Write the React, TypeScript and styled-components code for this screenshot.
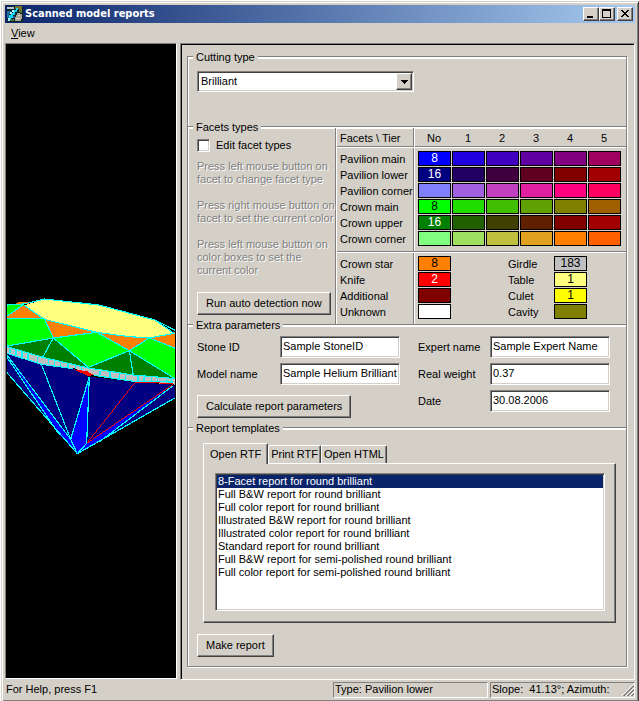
import React, { useState } from "react";
import styled, { createGlobalStyle, css } from "styled-components";

const sans = '"Liberation Sans", Arial, sans-serif';
const titleSans = '"DejaVu Sans Condensed", Tahoma, sans-serif';

const c = {
  face: "#d4d0c8",
  shadow: "#808080",
  dark: "#404040",
  light: "#ffffff",
  select: "#0a246a",
};

const raised = css`
  border: 1px solid;
  border-color: ${c.light} ${c.dark} ${c.dark} ${c.light};
  box-shadow: inset -1px -1px 0 ${c.shadow};
`;

const sunken = css`
  border: 1px solid;
  border-color: ${c.shadow} ${c.light} ${c.light} ${c.shadow};
  box-shadow: inset 1px 1px 0 ${c.dark}, inset -1px -1px 0 ${c.face};
`;

const Global = createGlobalStyle`
  * { box-sizing: border-box; }
  body {
    margin: 0;
    background: #fff;
    color: #000;
    font: 11px/13px ${sans};
  }
  button, input, select { font: inherit; color: inherit; }
`;

const Page = styled.div`
  min-height: 100vh;
  padding: 1px 0 0 1px;
  display: flex;
`;

const Window = styled.main`
  flex: 1;
  min-width: 0;
  display: flex;
  flex-direction: column;
  padding: 3px;
  background: ${c.face};
  border: 1px solid;
  border-color: ${c.face} ${c.dark} ${c.dark} ${c.face};
  box-shadow: inset 1px 1px 0 ${c.light}, inset -1px -1px 0 ${c.shadow};
`;

const TitleBar = styled.header`
  display: flex;
  align-items: center;
  gap: 2px;
  height: 18px;
  padding: 0 2px;
  background: linear-gradient(90deg, #0a246a, #a6caf0);
`;

const Title = styled.h1`
  flex: 1;
  margin: 0;
  color: #fff;
  font: bold 11px/16px ${titleSans};
`;

const Caption = styled.div`
  display: flex;
`;

const CaptionButton = styled.button<{ $apart?: boolean }>`
  ${raised}
  width: 16px;
  height: 14px;
  padding: 0;
  margin-left: ${(p) => (p.$apart ? 2 : 0)}px;
  background: ${c.face};
  display: flex;
  svg {
    width: 14px;
    height: 12px;
  }
`;

const MenuBar = styled.nav`
  height: 20px;
  padding: 4px 3px;
`;

const MenuItem = styled.button`
  display: block;
  padding: 0 3px;
  border: 0;
  background: none;
`;

const Body = styled.div`
  flex: 1;
  display: flex;
  gap: 3px;
`;

const ModelView = styled.section`
  flex: 0 0 172px;
  display: flex;
  margin-bottom: 1px;
  background: #000;
  border: 1px solid;
  border-color: ${c.shadow} ${c.light} ${c.light} ${c.shadow};
  padding: 1px;
  svg {
    flex: 1;
    min-width: 0;
  }
`;

const Panel = styled.section`
  flex: 1;
  min-width: 0;
  padding: 12px 7px 10px 6px;
  border: 1px solid;
  border-color: ${c.shadow} ${c.light} ${c.light} ${c.shadow};
  box-shadow: inset 1px 1px 0 #000;
`;

const Groups = styled.div`
  display: flex;
  flex-direction: column;
  border: solid ${c.shadow};
  border-width: 0 1px 1px 1px;
  box-shadow: 1px 1px 0 ${c.light}, inset 1px 0 0 ${c.light};
`;

const Group = styled.fieldset`
  min-width: 0;
  margin: 0;
  border: 0;
  padding: 0;
  &:first-child {
    margin-top: -6px;
  }
`;

const Legend = styled.legend`
  display: flex;
  align-items: center;
  gap: 3px;
  width: 100%;
  height: 14px;
  padding: 0;
  &::before,
  &::after {
    content: "";
    width: 5px;
    height: 2px;
    background: ${c.light};
    border-top: 1px solid ${c.shadow};
  }
  &::after {
    flex: 1;
  }
`;

const GroupBody = styled.div<{ $pad: string }>`
  padding: ${(p) => p.$pad};
`;

const Combo = styled.div`
  ${sunken}
  position: relative;
  width: 217px;
  height: 21px;
  padding: 1px;
  background: #fff;
`;

const ComboSelect = styled.select`
  appearance: none;
  display: block;
  width: 100%;
  height: 17px;
  padding: 0 18px 0 2px;
  border: 0;
  background: #fff;
`;

const ComboArrow = styled.span`
  ${raised}
  position: absolute;
  top: 1px;
  right: 1px;
  width: 16px;
  height: 17px;
  background: ${c.face};
  pointer-events: none;
  display: flex;
  align-items: center;
  justify-content: center;
`;

const PushButton = styled.button`
  ${raised}
  height: 23px;
  padding: 0 8px;
  background: ${c.face};
  white-space: nowrap;
`;

const FacetLayout = styled.div`
  display: flex;
  margin: -6px 0;
`;

const FacetSide = styled.div`
  flex: 0 0 149px;
  padding: 11px 0 0 9px;
  border-right: 1px solid ${c.light};
  box-shadow: inset -1px 0 0 ${c.shadow};
`;

const CheckLabel = styled.label`
  display: flex;
  align-items: center;
  gap: 6px;
  height: 13px;
`;

const CheckBox = styled.input`
  ${sunken}
  appearance: none;
  width: 13px;
  height: 13px;
  margin: 0;
  background: #fff;
  &:checked {
    background: radial-gradient(#000 3px, #fff 3px);
  }
`;

const Hints = styled.div`
  padding: 8px 0 15px;
  color: ${c.shadow};
  text-shadow: 1px 1px 0 ${c.light};
  white-space: pre;
  p {
    margin: 0 0 13px;
  }
  p:last-child {
    margin: 0;
  }
`;

const FacetTable = styled.table`
  flex: 1;
  border-spacing: 0;
  table-layout: fixed;
  width: 100%;
  min-width: 0;
`;

const LabelCell = styled.th`
  width: 78px;
  height: 16px;
  padding: 0 0 0 3px;
  font-weight: normal;
  text-align: left;
  white-space: nowrap;
  border-right: 1px solid ${c.light};
  box-shadow: inset -1px 0 0 ${c.shadow};
`;

const HeadRow = styled.tr`
  th {
    height: 20px;
    padding-top: 1px;
    border-bottom: 1px solid ${c.light};
    background: linear-gradient(${c.shadow}, ${c.shadow}) bottom / 100% 1px no-repeat padding-box;
  }
`;

const TierCell = styled.th<{ $first?: boolean }>`
  width: ${(p) => (p.$first ? 37 : 34)}px;
  padding: 0 2px 0 ${(p) => (p.$first ? 3 : 0)}px;
  font-weight: normal;
  text-align: center;
`;

const RestCell = styled.th`
  padding: 0;
`;

const Gap = styled.tr<{ $size: number }>`
  th,
  td {
    height: ${(p) => p.$size}px;
    line-height: 0;
    padding: 0;
  }
`;

const LineRow = styled.tr`
  td {
    height: 2px;
    padding: 0;
    border-top: 1px solid ${c.shadow};
    background: ${c.light};
  }
`;

const SwatchCell = styled.td<{ $first?: boolean }>`
  height: 16px;
  padding: 0 0 1px ${(p) => (p.$first ? 3 : 0)}px;
`;

const NameCell = styled.td`
  padding: 0 0 0 56px;
`;

const Swatch = styled.button<{ $bg: string; $fg?: string }>`
  display: block;
  width: 33px;
  height: 15px;
  padding: 0;
  border: 1px solid #000;
  background: ${(p) => p.$bg};
  color: ${(p) => p.$fg || "#000"};
  font-size: 12px;
  line-height: 13px;
  text-align: center;
`;

const ExtraLayout = styled.div`
  display: grid;
  grid-template-columns: 203px 192px;
  column-gap: 18px;
`;

const FieldColumn = styled.div`
  display: flex;
  flex-direction: column;
  align-items: flex-start;
  gap: 5px;
  > button {
    margin-top: 5px;
  }
`;

const Field = styled.label<{ $label: number }>`
  display: grid;
  grid-template-columns: ${(p) => p.$label}px 120px;
  align-items: center;
  height: 22px;
`;

const FieldText = styled.span`
  white-space: nowrap;
`;

const TextBox = styled.input`
  ${sunken}
  width: 120px;
  height: 22px;
  padding: 0 1px 2px 2px;
  background: #fff;
`;

const TabArea = styled.div`
  margin: 0 1px 11px 6px;
`;

const TabList = styled.div`
  display: flex;
  align-items: flex-end;
  height: 21px;
  margin-bottom: -1px;
`;

const Tab = styled.button<{ $active: boolean }>`
  position: relative;
  height: ${(p) => (p.$active ? 21 : 18)}px;
  margin-bottom: ${(p) => (p.$active ? 0 : 1)}px;
  padding: 0 ${(p) => (p.$active ? 6 : 2)}px;
  border: solid;
  border-width: 1px 1px 0 1px;
  border-color: ${c.light} ${c.dark} ${c.light} ${c.light};
  border-radius: 2px 2px 0 0;
  box-shadow: inset -1px 0 0 ${c.shadow};
  background: ${c.face};
  white-space: nowrap;
`;

const TabPanel = styled.div`
  ${raised}
  padding: 9px 10px 11px 11px;
`;

const ReportList = styled.ul`
  ${sunken}
  height: 138px;
  margin: 0;
  padding: 1px;
  background: #fff;
  list-style: none;
`;

const ReportItem = styled.li<{ $selected: boolean }>`
  height: 13px;
  padding: 0 1px;
  white-space: nowrap;
  background: ${(p) => (p.$selected ? c.select : "transparent")};
  color: ${(p) => (p.$selected ? "#fff" : "#000")};
`;

const StatusBar = styled.footer`
  display: flex;
  gap: 2px;
  height: 18px;
  padding-top: 2px;
`;

const StatusText = styled.span`
  flex: 1;
  padding: 1px;
`;

const StatusPane = styled.span<{ $width: number }>`
  flex: 0 0 ${(p) => p.$width}px;
  display: flex;
  justify-content: space-between;
  height: 16px;
  padding-left: 1px;
  border: 1px solid;
  border-color: ${c.shadow} ${c.light} ${c.light} ${c.shadow};
  white-space: pre;
`;

const tiers: { name: string; count?: string; fg?: string; colors: string[] }[] = [
  { name: "Pavilion main", count: "8", fg: "#fff", colors: ["#0000ff", "#2000df", "#4000bf", "#6000a0", "#800080", "#a00060"] },
  { name: "Pavilion lower", count: "16", fg: "#fff", colors: ["#000080", "#200060", "#400040", "#600020", "#800000", "#a00000"] },
  { name: "Pavilion corner", colors: ["#8080ff", "#a060df", "#c040bf", "#e020a0", "#ff0080", "#ff0060"] },
  { name: "Crown main", count: "8", colors: ["#00ff00", "#20df00", "#40bf00", "#60a000", "#808000", "#a06000"] },
  { name: "Crown upper", count: "16", fg: "#fff", colors: ["#008000", "#206000", "#404000", "#602000", "#800000", "#a00000"] },
  { name: "Crown corner", colors: ["#80ff80", "#a0e060", "#c0c040", "#e0a020", "#ff8000", "#ff6000"] },
];

const others = [
  [{ name: "Crown star", bg: "#ff8000", count: "8" }, { name: "Girdle", bg: "#c0c0c0", count: "183" }],
  [{ name: "Knife", bg: "#ff0000", fg: "#fff", count: "2" }, { name: "Table", bg: "#ffff80", count: "1" }],
  [{ name: "Additional", bg: "#800000" }, { name: "Culet", bg: "#ffff00", count: "1" }],
  [{ name: "Unknown", bg: "#ffffff" }, { name: "Cavity", bg: "#808000" }],
] as { name: string; bg: string; fg?: string; count?: string }[][];

const reports = [
  "8-Facet report for round brilliant",
  "Full B&W report for round brilliant",
  "Full color report for round brilliant",
  "Illustrated B&W report for round brilliant",
  "Illustrated color report for round brilliant",
  "Standard report for round brilliant",
  "Full B&W report for semi-polished round brilliant",
  "Full color report for semi-polished round brilliant",
];

const tabs = ["Open RTF", "Print RTF", "Open HTML"];

function AppIcon() {
  return (
    <svg width="16" height="16" viewBox="0 0 16 16" shapeRendering="crispEdges" aria-hidden="true">
      <rect width="16" height="16" fill="#10262e" />
      <path d="M0 1h7v2h-7z" fill="#b8c4d8" />
      <path d="M8 0h7v6h-3v-3h-4z" fill="#77722c" />
      <path d="M0 5h4v3h-2v4h-2z" fill="#1d6f9c" />
      <path d="M9 2h2v2h-1v2h-2v3h-2v3h-2v2h-3v-2h1v-3h2v-2h2v-3h3z" fill="#18d8f0" />
      <path d="M5 4h2v2h-2v2h-2v-2h2zM1 12h2v3h-2z" fill="#a8f4ff" />
      <path d="M10 7h3v1h2v5h-1v2h-6v-4h1v-2h1z" fill="#a9a596" />
      <path d="M11 9h2v1h-2zM9 12h4v1h-4z" fill="#d8d4c4" />
      <path d="M4 13h3v2h-3zM13 5h2v2h-2z" fill="#4c7a34" />
      <path d="M6 10h2v2h-2z" fill="#3050a0" />
    </svg>
  );
}

function Diamond() {
  return (
    <svg viewBox="7 45 168 632" shapeRendering="crispEdges" role="img" aria-label="Scanned diamond model">
      <g transform="translate(0 280) scale(0.33333)">
        <path d="M21 222L125 255L225 268L268 290L400 306L518 314L528 322V352L232 521L21 278Z" fill="#000080" />
        <path d="M21 225L212 478L232 521L175 462Z" fill="#0000ff" />
        <path d="M268 290L262 490L232 521L212 478Z" fill="#0000ff" />
        <path d="M518 314L300 484L232 521L260 490Z" fill="#0000ff" />
        <path d="M21 75L72 76L133 116L160 174L290 157L388 212L448 174L528 206V298L400 286L265 262L21 198Z" fill="#00ff00" />
        <path d="M68 76L133 116L21 116V108ZM48 68L90 65L88 72L50 73Z" fill="#ff8000" />
        <path d="M133 118L290 157L160 174ZM290 157L448 174L388 212ZM448 174L522 160L528 150V206Z" fill="#ff8000" />
        <path d="M21 198L160 174L265 262L128 233ZM265 262L388 212L528 298L400 286Z" fill="#008000" />
        <path d="M388 212L448 174L528 206V298Z" fill="#00ff00" />
        <path d="M72 76L133 58L297 75L465 120L522 160L448 174L388 170L290 157L133 118Z" fill="#ffff80" />
        <path d="M21 200L128 232L265 264L400 285L528 296V314L400 305L275 284L220 264L125 253L21 220Z" fill="#c0c0c0" />
        <g fill="none" stroke="#00ffff" strokeWidth="3.5">
          <path d="M21 75L72 72L133 57L297 75L465 120L528 152M72 76L133 118L290 157L388 170L448 174L522 160L465 120M68 76L21 108M21 116H133L160 174L290 157L388 212L448 174L528 206" />
          <path d="M21 198L160 174L128 232M160 174L265 262L388 212L400 286M388 212L528 298" />
          <path d="M21 200L128 232L265 264L400 285L528 296M21 220L125 253L220 266M282 286L400 304L518 306" />
          <path d="M30 206V220M48 210V224M66 216V234M84 222V240M112 230V248M146 238V252M164 242V258M182 248V260M204 252V264M226 256V266M244 262V270M300 272V286M330 276V292M358 280V298M376 284V300M414 288V304M432 290V304M454 294V306M472 296V306M500 296V310M514 296V312" />
          <path d="M21 225L212 478M21 232L178 464M21 278L232 521L528 352M125 255L212 478L232 521M212 478L268 290L260 490L232 521M518 318L300 484" />
        </g>
        <path d="M222 268L262 274L280 284L265 289Z" fill="#ff0000" />
        <path d="M405 308L260 490L518 314M405 307L518 310" fill="none" stroke="#ff0000" strokeWidth="3" />
      </g>
    </svg>
  );
}

export default function App() {
  const [tab, setTab] = useState(0);
  const [report, setReport] = useState(0);

  return (
    <Page>
      <Global />
      <Window>
        <TitleBar>
          <AppIcon />
          <Title>Scanned model reports</Title>
          <Caption>
            <CaptionButton aria-label="Minimize">
              <svg viewBox="0 0 14 12" shapeRendering="crispEdges"><path d="M3 8h6v2h-6z" /></svg>
            </CaptionButton>
            <CaptionButton aria-label="Maximize">
              <svg viewBox="0 0 14 12" shapeRendering="crispEdges"><path fillRule="evenodd" d="M2 1h9v9h-9zM3 3v6h7v-6z" /></svg>
            </CaptionButton>
            <CaptionButton aria-label="Close" $apart>
              <svg viewBox="0 0 14 12" shapeRendering="crispEdges">
                <path d="M3 2h2v1h1v1h2v-1h1v-1h2v1h-1v1h-1v1h-1v1h1v1h1v1h1v1h-2v-1h-1v-1h-2v1h-1v1h-2v-1h1v-1h1v-1h1v-1h-1v-1h-1v-1h-1z" />
              </svg>
            </CaptionButton>
          </Caption>
        </TitleBar>
        <MenuBar>
          <MenuItem><u>V</u>iew</MenuItem>
        </MenuBar>
        <Body>
          <ModelView><Diamond /></ModelView>
          <Panel>
            <Groups>
              <Group>
                <Legend>Cutting type</Legend>
                <GroupBody $pad="7px 9px 28px">
                  <Combo>
                    <ComboSelect aria-label="Cutting type" defaultValue="Brilliant">
                      <option>Brilliant</option>
                    </ComboSelect>
                    <ComboArrow>
                      <svg width="7" height="4" viewBox="0 0 7 4" shapeRendering="crispEdges"><path d="M0 0h7v1h-1v1h-1v1h-1v1h-1v-1h-1v-1h-1v-1h-1z" /></svg>
                    </ComboArrow>
                  </Combo>
                </GroupBody>
              </Group>

              <Group>
                <Legend>Facets types</Legend>
                <FacetLayout>
                  <FacetSide>
                    <CheckLabel><CheckBox type="checkbox" /> Edit facet types</CheckLabel>
                    <Hints>
                      <p>{"Press left mouse button on\nfacet to change facet type"}</p>
                      <p>{"Press right mouse button on\nfacet to set the current color"}</p>
                      <p>{"Press left mouse button on\ncolor boxes to set the\ncurrent color"}</p>
                    </Hints>
                    <PushButton>Run auto detection now</PushButton>
                  </FacetSide>
                  <FacetTable>
                    <thead>
                      <HeadRow>
                        <LabelCell scope="col">Facets \ Tier</LabelCell>
                        {["No", "1", "2", "3", "4", "5"].map((t, i) => (
                          <TierCell key={t} scope="col" $first={i === 0}>{t}</TierCell>
                        ))}
                        <RestCell />
                      </HeadRow>
                    </thead>
                    <tbody>
                      <Gap $size={3}><LabelCell as="td" /><td colSpan={7} /></Gap>
                      {tiers.map((row) => (
                        <tr key={row.name}>
                          <LabelCell scope="row">{row.name}</LabelCell>
                          {row.colors.map((color, i) => (
                            <SwatchCell key={i} $first={i === 0}>
                              <Swatch $bg={color} $fg={row.fg} aria-label={i ? `${row.name}, tier ${i}` : undefined}>
                                {i === 0 ? row.count : null}
                              </Swatch>
                            </SwatchCell>
                          ))}
                        </tr>
                      ))}
                      <Gap $size={4}><LabelCell as="td" /><td colSpan={7} /></Gap>
                      <LineRow><td colSpan={8} /></LineRow>
                    </tbody>
                    <tbody>
                      <Gap $size={3}><LabelCell as="td" /><td colSpan={7} /></Gap>
                      {others.map(([a, b]) => (
                        <tr key={a.name}>
                          <LabelCell scope="row">{a.name}</LabelCell>
                          <SwatchCell $first><Swatch $bg={a.bg} $fg={a.fg}>{a.count}</Swatch></SwatchCell>
                          <NameCell colSpan={3}>{b.name}</NameCell>
                          <SwatchCell><Swatch $bg={b.bg} $fg={b.fg}>{b.count}</Swatch></SwatchCell>
                        </tr>
                      ))}
                      <Gap $size={4}><LabelCell as="td" /><td colSpan={7} /></Gap>
                    </tbody>
                  </FacetTable>
                </FacetLayout>
              </Group>

              <Group>
                <Legend>Extra parameters</Legend>
                <GroupBody $pad="4px 9px 3px">
                  <ExtraLayout>
                    <FieldColumn>
                      <Field $label={83}><FieldText>Stone ID</FieldText><TextBox defaultValue="Sample StoneID" /></Field>
                      <Field $label={83}><FieldText>Model name</FieldText><TextBox defaultValue="Sample Helium Brilliant" /></Field>
                      <PushButton>Calculate report parameters</PushButton>
                    </FieldColumn>
                    <FieldColumn>
                      <Field $label={72}><FieldText>Expert name</FieldText><TextBox defaultValue="Sample Expert Name" /></Field>
                      <Field $label={72}><FieldText>Real weight</FieldText><TextBox defaultValue="0.37" /></Field>
                      <Field $label={72}><FieldText>Date</FieldText><TextBox defaultValue="30.08.2006" /></Field>
                    </FieldColumn>
                  </ExtraLayout>
                </GroupBody>
              </Group>

              <Group>
                <Legend>Report templates</Legend>
                <GroupBody $pad="8px 9px 9px">
                  <TabArea>
                    <TabList role="tablist">
                      {tabs.map((t, i) => (
                        <Tab key={t} role="tab" aria-selected={i === tab} $active={i === tab} onClick={() => setTab(i)}>{t}</Tab>
                      ))}
                    </TabList>
                    <TabPanel role="tabpanel">
                      <ReportList role="listbox" aria-label="Report templates">
                        {reports.map((r, i) => (
                          <ReportItem key={r} role="option" aria-selected={i === report} $selected={i === report} onClick={() => setReport(i)}>{r}</ReportItem>
                        ))}
                      </ReportList>
                    </TabPanel>
                  </TabArea>
                  <PushButton>Make report</PushButton>
                </GroupBody>
              </Group>
            </Groups>
          </Panel>
        </Body>
        <StatusBar>
          <StatusText>For Help, press F1</StatusText>
          <StatusPane $width={155}>Type: Pavilion lower</StatusPane>
          <StatusPane $width={145}>
            {"Slope:  41.13°; Azimuth:"}
            <svg width="12" height="13" viewBox="0 0 12 13" aria-hidden="true">
              <path d="M0 13L12 1M4 13L12 5M8 13L12 9" stroke="#fff" fill="none" />
              <path d="M1 13L12 2M2 13L12 3M5 13L12 6M6 13L12 7M9 13L12 10M10 13L12 11" stroke="#808080" fill="none" />
            </svg>
          </StatusPane>
        </StatusBar>
      </Window>
    </Page>
  );
}
